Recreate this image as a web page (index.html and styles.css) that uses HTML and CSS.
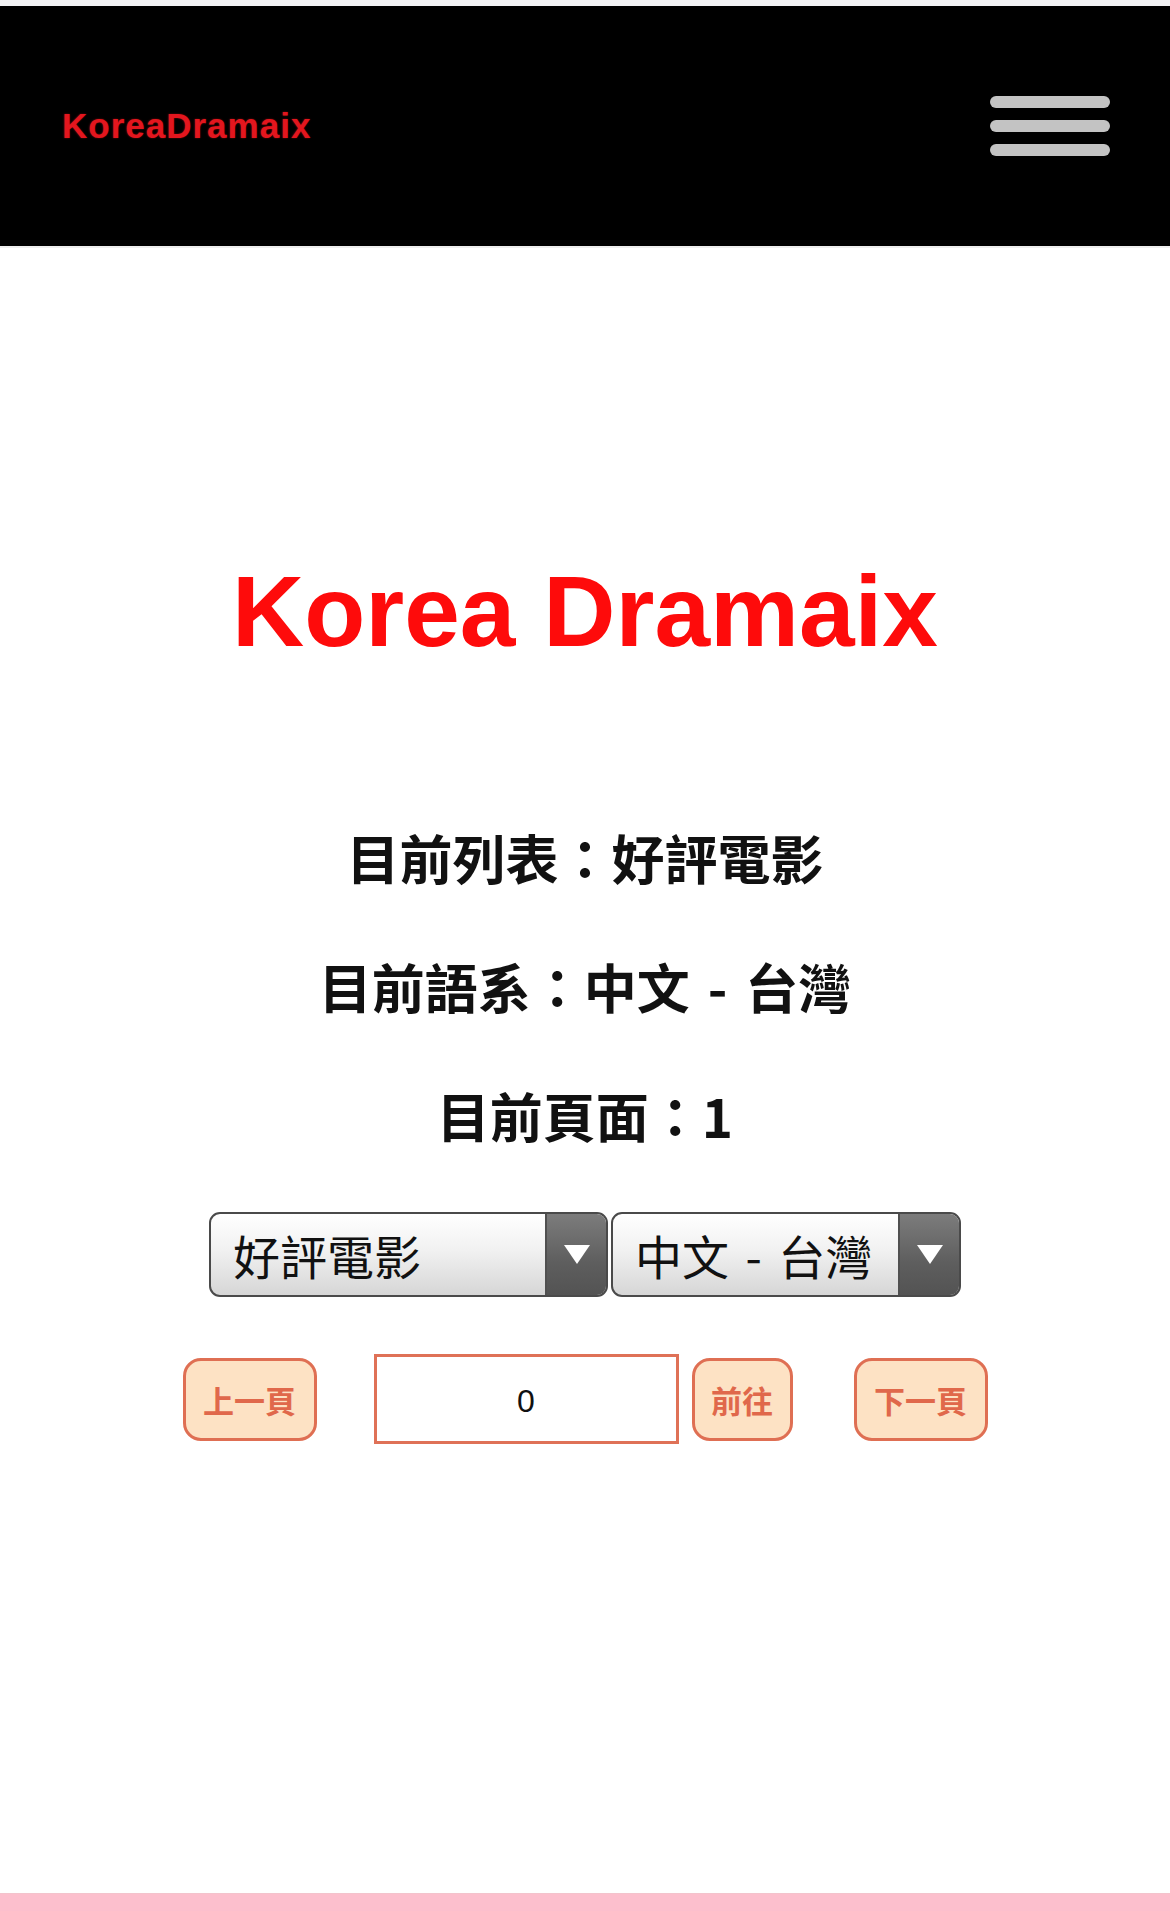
FILE: index.html
```html
<!DOCTYPE html>
<html lang="zh-Hant">
<head>
<meta charset="utf-8">
<title>KoreaDramaix</title>
<link rel="stylesheet" href="styles.css">
</head>
<body>
<div class="page">
  <div class="top-strip"></div>
  <header class="site-header">
    <a class="brand" href="#">KoreaDramaix</a>
    <button class="menu-toggle" type="button" aria-label="menu">
      <span class="bar"></span>
      <span class="bar"></span>
      <span class="bar"></span>
    </button>
  </header>

  <main class="content">
    <h1 class="title">Korea Dramaix</h1>
    <p class="info">目前列表：好評電影</p>
    <p class="info info-spaced">目前語系：中文 - 台灣</p>
    <p class="info">目前頁面：1</p>

    <div class="selects">
      <div class="select select-list">
        <select class="select-field">
          <option>好評電影</option>
        </select>
        <span class="select-arrow"><svg width="26" height="19" viewBox="0 0 26 19"><polygon points="0,0 26,0 13,19" fill="#fff"/></svg></span>
      </div>
      <div class="select select-lang">
        <select class="select-field select-field-spaced">
          <option>中文 - 台灣</option>
        </select>
        <span class="select-arrow"><svg width="26" height="19" viewBox="0 0 26 19"><polygon points="0,0 26,0 13,19" fill="#fff"/></svg></span>
      </div>
    </div>

    <div class="pager">
      <button class="pbtn pbtn-wide" type="button">上一頁</button>
      <input class="page-input" type="text" value="0">
      <button class="pbtn pbtn-go" type="button">前往</button>
      <button class="pbtn pbtn-wide pbtn-next" type="button">下一頁</button>
    </div>
  </main>

  <footer class="bottom-bar"></footer>
</div>
</body>
</html>
```
FILE: styles.css
```css
html, body {
  margin: 0;
  padding: 0;
  background: #ffffff;
}

body {
  font-family: "Liberation Sans", "Noto Sans CJK TC", sans-serif;
}

.page {
  min-height: 100vh;
  display: flex;
  flex-direction: column;
}

.top-strip {
  height: 6px;
  background: #f2f2f4;
}

.site-header {
  height: 240px;
  background: #000000;
  border-bottom: 2px solid #efefef;
  display: flex;
  align-items: center;
  justify-content: space-between;
  padding: 0 60px 0 62px;
}

.brand {
  color: #e3161e;
  font-family: "Liberation Sans", sans-serif;
  font-weight: 700;
  font-size: 35px;
  letter-spacing: 1px;
  text-decoration: none;
  text-shadow: 0 0 2px rgba(200, 20, 20, 0.6);
}

.menu-toggle {
  background: none;
  border: 0;
  padding: 0;
  display: flex;
  flex-direction: column;
  gap: 12px;
  cursor: pointer;
}

.menu-toggle .bar {
  display: block;
  width: 120px;
  height: 12px;
  border-radius: 6px;
  background: #c3c3c3;
}

.content {
  display: flex;
  flex-direction: column;
  align-items: center;
  text-align: center;
}

.title {
  margin: 303px 0 0;
  font-family: "Liberation Sans", sans-serif;
  font-weight: 700;
  font-size: 100px;
  line-height: 120px;
  color: #fe0b0b;
}

.info {
  margin: 0;
  font-family: "Noto Sans CJK TC", "Liberation Sans", sans-serif;
  font-weight: 700;
  font-size: 53px;
  line-height: 77px;
  color: #111111;
}

.info-spaced {
  word-spacing: 6px;
}

.title + .info {
  margin-top: 148px;
}

.info + .info {
  margin-top: 52px;
}

.selects {
  margin-top: 58px;
  display: flex;
  gap: 3px;
}

.select {
  display: flex;
  height: 81px;
  border: 2px solid #4a4a4a;
  border-radius: 11px;
  overflow: hidden;
  background: linear-gradient(#ffffff, #f1f1f1 45%, #d6d6d6);
}

.select-list { width: 395px; }
.select-lang { width: 346px; }

.select-field {
  flex: 1;
  min-width: 0;
  appearance: none;
  -webkit-appearance: none;
  border: 0;
  margin: 0;
  background: transparent;
  padding: 0 0 0 22px;
  font-family: "Noto Sans CJK TC", "Liberation Sans", sans-serif;
  font-size: 47px;
  color: #111111;
  outline: none;
}

.select-field-spaced {
  word-spacing: 6px;
}

.select-arrow {
  width: 59px;
  flex: none;
  border-left: 2px solid #505050;
  background: linear-gradient(#7c7c7c, #5e5e5e 60%, #535353);
  display: flex;
  align-items: center;
  justify-content: center;
}

.pager {
  margin-top: 57px;
  display: flex;
  align-items: center;
}

.pbtn {
  height: 83px;
  border: 3px solid #df6f53;
  border-radius: 18px;
  background: #fde2c4;
  color: #e0684b;
  font-family: "Noto Sans CJK TC", sans-serif;
  font-weight: 700;
  font-size: 31px;
  padding: 0;
  cursor: pointer;
}

.pbtn-wide { width: 134px; }

.pbtn-go {
  width: 101px;
  margin-left: 13px;
}

.pbtn-next { margin-left: 61px; }

.page-input {
  box-sizing: border-box;
  width: 305px;
  height: 90px;
  margin-left: 57px;
  border: 3px solid #df7157;
  border-radius: 0;
  background: #ffffff;
  text-align: center;
  font-family: "Liberation Sans", sans-serif;
  font-size: 32px;
  color: #111111;
  outline: none;
  padding: 4px 0 0;
}

.bottom-bar {
  margin-top: auto;
  height: 17px;
  background: #fcbfcd;
  border-top: 1px solid #f3c3cc;
}
```
